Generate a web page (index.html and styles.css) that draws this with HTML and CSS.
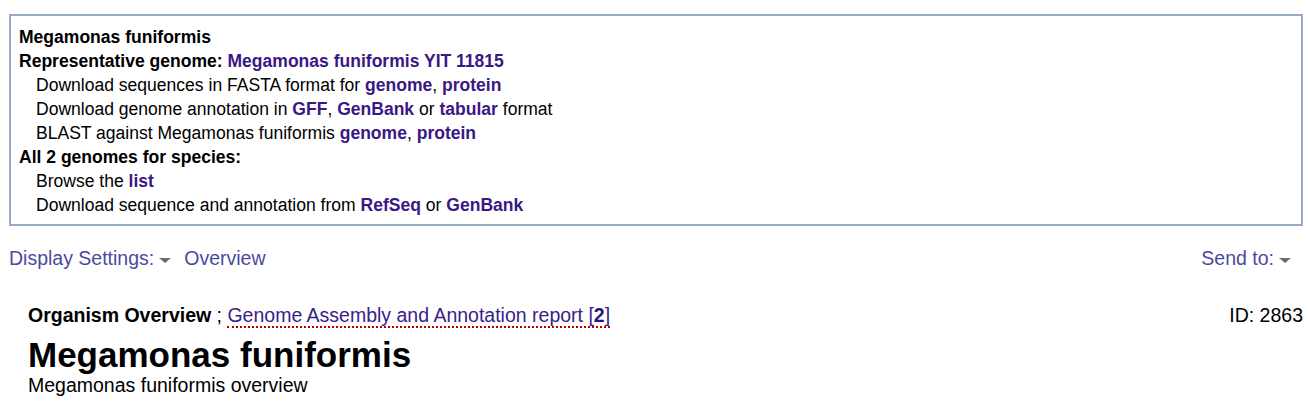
FILE: index.html
```html
<!DOCTYPE html>
<html>
<head>
<meta charset="utf-8">
<link rel="stylesheet" href="styles.css">
</head>
<body>
<div class="page">
  <div class="infobox">
    <div class="line b">Megamonas funiformis</div>
    <div class="line b">Representative genome: <a class="lk" href="#">Megamonas funiformis YIT 11815</a></div>
    <div class="line ind">Download sequences in FASTA format for <a class="lk" href="#">genome</a>, <a class="lk" href="#">protein</a></div>
    <div class="line ind">Download genome annotation in <a class="lk" href="#">GFF</a>, <a class="lk" href="#">GenBank</a> or <a class="lk" href="#">tabular</a> format</div>
    <div class="line ind">BLAST against Megamonas funiformis <a class="lk" href="#">genome</a>, <a class="lk" href="#">protein</a></div>
    <div class="line b">All 2 genomes for species:</div>
    <div class="line ind">Browse the <a class="lk" href="#">list</a></div>
    <div class="line ind">Download sequence and annotation from <a class="lk" href="#">RefSeq</a> or <a class="lk" href="#">GenBank</a></div>
  </div>

  <div class="toolbar">
    <div class="tool-left">
      <span class="tlink">Display Settings:</span><span class="arrow"></span>
      <span class="tlink ov">Overview</span>
    </div>
    <div class="tool-right">
      <span class="tlink">Send to:</span><span class="arrow"></span>
    </div>
  </div>

  <div class="content">
    <div class="report-row">
      <div class="report-left"><b>Organism Overview</b> ; <a class="rep" href="#">Genome Assembly and Annotation report [<b>2</b>]</a></div>
      <div class="report-id">ID: 2863</div>
    </div>
    <h1 class="title">Megamonas funiformis</h1>
    <div class="subtitle">Megamonas funiformis overview</div>
  </div>
</div>
</body>
</html>
```
FILE: styles.css
```css
html, body {
  margin: 0;
  padding: 0;
  background: #fff;
}
body {
  font-family: "Liberation Sans", Arial, sans-serif;
  color: #000;
}
.page {
  padding: 14px 5px 0 9px;
}
.infobox {
  border: 2px solid #98a9c9;
  padding: 9px 8px 7px 8px;
  font-size: 17.55px;
  line-height: 24px;
}
.line.b {
  font-weight: bold;
}
.line.ind {
  padding-left: 17px;
}
.lk {
  color: #3b1785;
  font-weight: bold;
  text-decoration: none;
}
.toolbar {
  display: flex;
  justify-content: space-between;
  align-items: center;
  margin-top: 21px;
  font-size: 19.5px;
  line-height: 22px;
  padding-right: 12px;
}
.tool-left, .tool-right {
  display: flex;
  align-items: center;
}
.tlink {
  color: #4b4b9e;
}
.ov {
  margin-left: 13px;
}
.arrow {
  display: inline-block;
  width: 0;
  height: 0;
  border-left: 6px solid transparent;
  border-right: 6px solid transparent;
  border-top: 5px solid #6b6b6b;
  margin-left: 5px;
  margin-top: 5px;
}
.content {
  margin-top: 35px;
  padding-left: 19px;
}
.report-row {
  display: flex;
  justify-content: space-between;
  font-size: 19.5px;
  line-height: 22px;
}
.rep {
  color: #3a2189;
  text-decoration: none;
  border-bottom: 2px dotted #b00000;
}
.rep b {
  color: #2c1480;
}
.title {
  margin: 9px 0 0 0;
  font-size: 35px;
  line-height: 40px;
  font-weight: bold;
}
.subtitle {
  font-size: 19.5px;
  line-height: 22px;
  margin-top: -1px;
}
```
